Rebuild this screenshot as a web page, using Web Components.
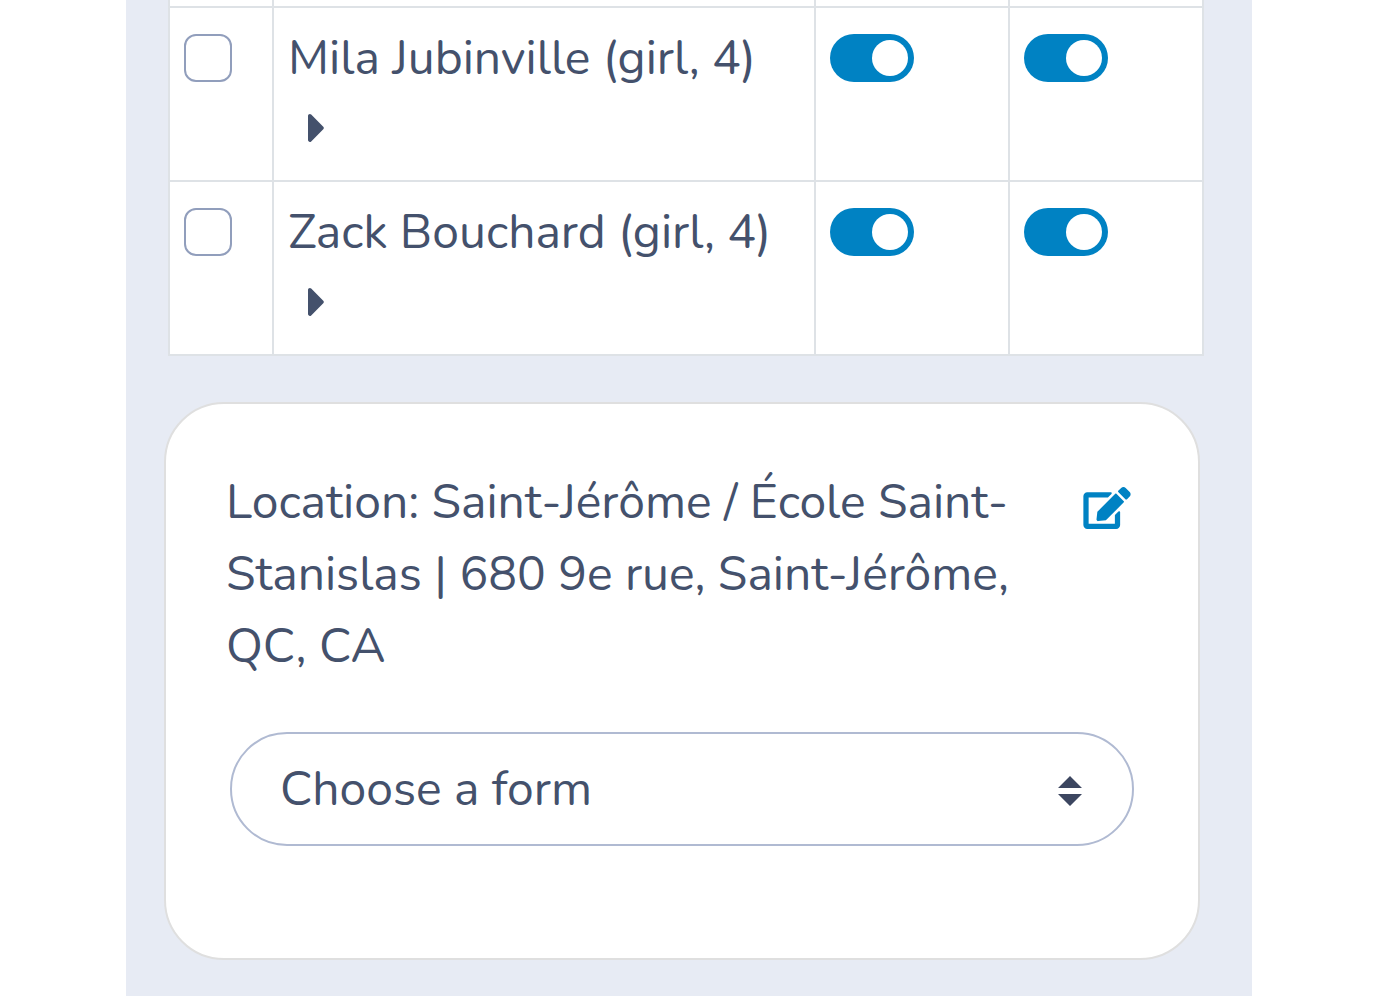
<!DOCTYPE html>
<html lang="en">
<head>
<meta charset="utf-8">
<meta name="viewport" content="width=device-width, initial-scale=1">
<title>Choose a form</title>
<style>
  body {
    margin: 0;
    background: #fff;
    color: #44516c;
    font: 400 48px/72px Nunito, Lato, "Open Sans", sans-serif;
  }
</style>
</head>
<body>

<page-panel>
  <people-table></people-table>
  <location-card>
    Location: Saint-Jérôme / École Saint-Stanislas | 680 9e rue, Saint-Jérôme, QC, CA
    <form-select slot="form"></form-select>
  </location-card>
</page-panel>

<script>
'use strict'

const define = (name, html, setup) => {
  const template = document.createElement('template')
  template.innerHTML = html
  customElements.define(name,
    class extends HTMLElement {
      constructor() {
        super()
        this
          .attachShadow({mode: 'open'})
          .appendChild(template.content.cloneNode(true))
      }

      connectedCallback() {
        if (setup) setup(this, this.shadowRoot)
      }
    }
  )
}


// PANEL

define('page-panel', `
  <style>
    :host {
      display: flex;
      flex-direction: column;
      gap: 46px;
      box-sizing: border-box;
      min-height: 100vh;
      margin: 0 148px 0 126px;
      padding: 0 48px 36px 38px;
      background: #e7ebf4;
    }
  </style>
  <slot></slot>
`)


// CHECKBOX

define('check-box', `
  <style>
    :host { display: block; height: 48px; }
    input {
      appearance: none;
      display: block;
      box-sizing: border-box;
      width: 48px;
      height: 48px;
      margin: 0;
      border: 2px solid #919ebc;
      border-radius: 12px;
      background: #fff;
    }
    input:checked { background: #0082c3; border-color: #0082c3; }
  </style>
  <input type="checkbox">
`, (host, root) => {
  root.querySelector('input').setAttribute('aria-label', host.getAttribute('label'))
})


// SWITCH

define('toggle-switch', `
  <style>
    :host { display: block; height: 48px; }
    input {
      appearance: none;
      display: flex;
      box-sizing: border-box;
      width: 84px;
      height: 48px;
      margin: 0;
      padding: 6px;
      border-radius: 24px;
      background: #919ebc;
    }
    input::before {
      content: '';
      width: 36px;
      height: 36px;
      border-radius: 50%;
      background: #fff;
    }
    input:checked { justify-content: flex-end; background: #0082c3; }
  </style>
  <input type="checkbox" role="switch" checked>
`, (host, root) => {
  root.querySelector('input').setAttribute('aria-label', host.getAttribute('label'))
})


// TABLE

const people = [
  'Mila Jubinville (girl, 4)',
  'Zack Bouchard (girl, 4)'
]

const row = name => `
  <tr>
    <td class="control"><check-box label="Select ${name}"></check-box></td>
    <td>
      ${name}
      <button type="button" aria-label="Details">
        <svg viewBox="0 0 192 512" width="18" height="48"><path d="M0 384.662V127.338c0-17.818 21.543-26.741 34.142-14.142l128.657 128.657c7.81 7.81 7.81 20.474 0 28.284L34.142 398.804C21.543 411.404 0 402.48 0 384.662z"/></svg>
      </button>
    </td>
    <td class="control"><toggle-switch label="First"></toggle-switch></td>
    <td class="control"><toggle-switch label="Second"></toggle-switch></td>
  </tr>
`

define('people-table', `
  <style>
    :host { display: block; margin-left: 4px; }
    table {
      width: 100%;
      table-layout: fixed;
      border-collapse: separate;
      border-spacing: 0;
      border-left: 2px solid #dee2e6;
      background: #fff;
    }
    .check { width: 104px; }
    .toggle { width: 194px; }
    th, td {
      box-sizing: border-box;
      border: solid #dee2e6;
      border-width: 0 2px 2px 0;
      text-align: left;
      vertical-align: top;
    }
    th { height: 8px; padding: 0; }
    td { padding: 14px; }
    td.control { padding-top: 26px; }
    button {
      display: block;
      padding: 10px 20px 14px;
      border: 0;
      background: none;
      color: inherit;
    }
    svg { display: block; fill: currentColor; }
  </style>
  <table>
    <colgroup><col class="check"><col><col class="toggle"><col class="toggle"></colgroup>
    <thead><tr><th></th><th></th><th></th><th></th></tr></thead>
    <tbody>${people.map(row).join('')}</tbody>
  </table>
`)


// SELECT

define('form-select', `
  <style>
    :host { display: grid; align-items: center; }
    select, svg { grid-area: 1 / 1; }
    select {
      appearance: none;
      box-sizing: border-box;
      width: 100%;
      height: 114px;
      margin: 0;
      padding: 0 100px 0 48px;
      border: 2px solid #b0bad2;
      border-radius: 57px;
      background: #fff;
      color: inherit;
      font: inherit;
    }
    svg {
      justify-self: end;
      margin-right: 52px;
      padding-top: 4px;
      fill: #3c4660;
      pointer-events: none;
    }
  </style>
  <select aria-label="Form"><option>Choose a form</option></select>
  <svg viewBox="0 0 24 30" width="24" height="30"><path d="M12 0l12 12H0zM0 18h24L12 30z"/></svg>
`)


// LOCATION CARD

define('location-card', `
  <style>
    :host {
      display: block;
      margin-right: 4px;
      padding: 62px 64px 112px 60px;
      border: 2px solid #dfdfdf;
      border-radius: 60px;
      background: #fff;
    }
    header {
      display: flex;
      align-items: flex-start;
      justify-content: space-between;
      gap: 64px;
    }
    p { flex: 1; margin: 0; }
    button {
      padding: 21px 3px;
      border: 0;
      background: none;
      color: #0082c3;
    }
    svg { display: block; fill: currentColor; }
    ::slotted(form-select) { margin: 50px 0 0 4px; }
  </style>
  <header>
    <p><slot></slot></p>
    <button type="button" aria-label="Edit location">
      <svg viewBox="0 0 576 512" width="48" height="42"><path d="M402.6 83.2l90.2 90.2c3.8 3.8 3.8 10 0 13.8L274.4 405.6l-92.8 10.3c-12.4 1.4-22.9-9.1-21.5-21.5l10.3-92.8L388.8 83.2c3.8-3.8 10-3.8 13.8 0zm162-22.9l-48.8-48.8c-15.2-15.2-39.9-15.2-55.2 0l-35.4 35.4c-3.8 3.8-3.8 10 0 13.8l90.2 90.2c3.8 3.8 10 3.8 13.8 0l35.4-35.4c15.2-15.3 15.2-40 0-55.2zM384 346.2V448H64V128h229.8c3.2 0 6.2-1.3 8.5-3.5l40-40c7.6-7.6 2.2-20.5-8.5-20.5H48C21.5 64 0 85.5 0 112v352c0 26.5 21.5 48 48 48h352c26.5 0 48-21.5 48-48V306.2c0-10.7-12.9-16-20.5-8.5l-40 40c-2.2 2.3-3.5 5.3-3.5 8.5z"/></svg>
    </button>
  </header>
  <slot name="form"></slot>
`)
</script>
</body>
</html>
